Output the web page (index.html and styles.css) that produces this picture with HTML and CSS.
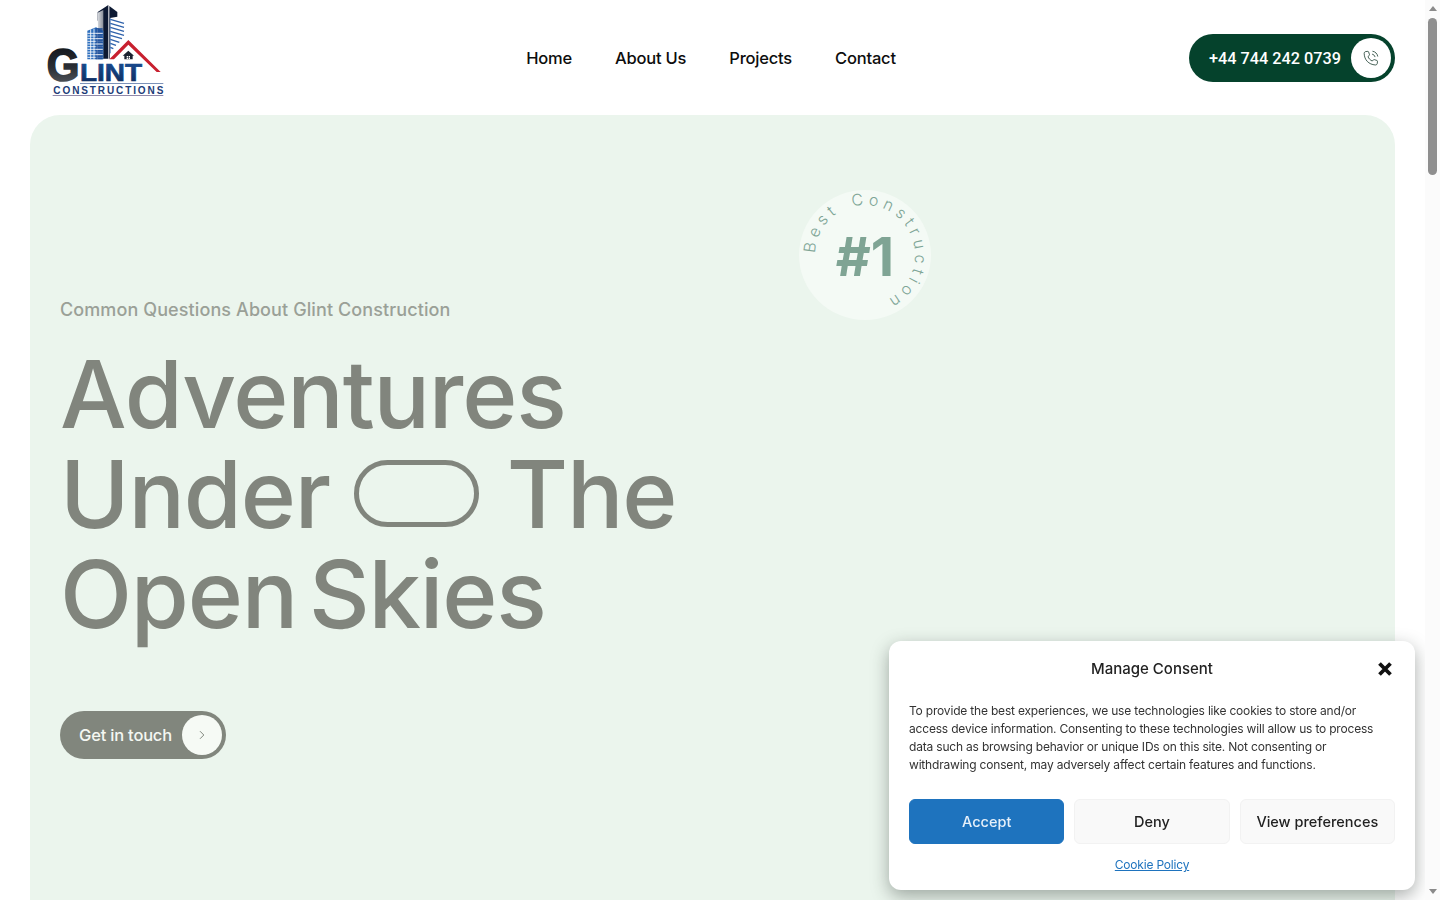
FILE: index.html
```html
<!DOCTYPE html>
<html lang="en">
<head>
<meta charset="utf-8">
<title>Glint Constructions</title>
<link rel="stylesheet" href="styles.css">
</head>
<body>
<div class="page">
  <header class="site-header">
    <a class="logo" href="#" aria-label="Glint Constructions">
      <svg class="logo-svg" viewBox="0 0 450 330" width="150" height="110">
        <defs>
          <linearGradient id="gd" x1="0" y1="0" x2="0" y2="1"><stop offset="0" stop-color="#0c0f14"/><stop offset=".55" stop-color="#2b2f36"/><stop offset="1" stop-color="#62666c"/></linearGradient>
          <linearGradient id="bl" x1="0" y1="0" x2="0" y2="1"><stop offset="0" stop-color="#1a4f96"/><stop offset="1" stop-color="#0d2a5a"/></linearGradient>
          <linearGradient id="tw" x1="0" y1="0" x2="1" y2="0"><stop offset="0" stop-color="#d8dbe0"/><stop offset="1" stop-color="#8b909a"/></linearGradient>
        </defs>
        <path d="M203 36 235 15V176H219V60L203 62Z" fill="#0e1a33"/>
        <path d="M203 38 220 30V176H206Z" fill="url(#tw)"/>
        <path d="M238 18 262 36V50L240 54V176H238Z" fill="#0e1a33"/>
        <path class="wing" d="M241 58 282 70M241 70 282 82M241 82 282 94M241 94 282 106M241 106 276 116M241 118 268 127M241 130 258 136M241 142 250 146"/>
        <path class="wing-side" d="M241 54V160"/>
        <path d="M172 92 198 82 220 92V178H172Z" fill="#2f6fbd"/>
        <path class="grid-line" d="M172 100H218M172 108H218M172 116H218M172 124H218M172 132H218M172 140H218M172 148H218M172 156H218M172 164H218M172 172H218M182 88V178M192 86V178M202 86V178"/>
        <path d="M197 84H218V178H197Z" fill="#1b4a94" opacity=".75"/>
        <path class="grid-line" d="M197 100H218M197 116H218M197 132H218M197 148H218M197 164H218"/>
        <path d="M238 178 295 120 392 216 380 216 295 134 252 178Z" fill="#c8202f"/>
        <path d="M295 152 312 167H308V178H283V167H278Z" fill="#1a2230"/>
        <path d="M290 168H294V172H290ZM296 168H300V172H296ZM290 173H294V177H290ZM296 173H300V177H296Z" fill="#fff"/>
        <text class="logo-g" x="50" y="244" textLength="98" lengthAdjust="spacingAndGlyphs" fill="url(#gd)" stroke="url(#gd)">G</text>
        <text class="logo-lint" x="150" y="243" textLength="186" lengthAdjust="spacingAndGlyphs" fill="url(#bl)" stroke="url(#bl)">LINT</text>
        <rect x="150" y="249" width="250" height="2" fill="#3b5c96"/>
        <text class="logo-sub" x="70" y="282" textLength="330" lengthAdjust="spacing" fill="#1c3c78">CONSTRUCTIONS</text>
        <rect x="68" y="286" width="332" height="2" fill="#5a4f80"/>
      </svg>
    </a>
    <nav class="main-nav">
      <a href="#">Home</a>
      <a href="#">About Us</a>
      <a href="#">Projects</a>
      <a href="#">Contact</a>
    </nav>
    <a class="phone-pill" href="#">
      <span class="phone-num">+44 744 242 0739</span>
      <span class="pill-circle">
        <svg viewBox="0 0 24 24" width="19" height="19" class="phone-icon">
          <path d="M6.200 3.200 8.600 3c.5 0 .9.3 1 .7l1.100 3.400c.1.400 0 .8-.3 1.100L8.800 9.600c.9 2.300 2.900 4.500 5.400 5.600l1.500-1.500c.3-.3.7-.4 1.100-.3l3.300 1.100c.4.100.7.500.7 1l-.2 2.500c-.1 1.300-1.200 2.300-2.500 2.200C9.700 19.500 4.300 13.900 4 5.700 4 4.400 4.900 3.300 6.200 3.200Z"/>
          <path d="M14 6.500c2 .4 3.300 1.700 3.700 3.700M14.500 2.800c3.600.6 6.100 3.100 6.700 6.700"/>
        </svg>
      </span>
    </a>
  </header>

  <main class="hero">
    <div class="hero-copy">
      <p class="eyebrow">Common Questions About Glint Construction</p>
      <h1 class="hero-title">
        <span class="title-line">Adventures</span>
        <span class="title-line">Under <span class="title-pill"></span> The</span>
        <span class="title-line">Open Skies</span>
      </h1>
      <a class="cta" href="#">
        <span class="cta-label">Get in touch</span>
        <span class="cta-circle">
          <svg viewBox="0 0 10 10" width="10" height="10" class="chev"><path d="M3 1.200 6.800 5 3 8.800"/></svg>
        </span>
      </a>
    </div>
    <div class="badge">
      <svg viewBox="0 0 132 130" width="132" height="130" class="badge-ring">
        <defs><path id="ring" d="M16 63.300A50 50 0 1 1 78.900 113.300"/></defs>
        <text class="ring-text"><textPath href="#ring" textLength="209" lengthAdjust="spacing">Best Construction</textPath></text>
      </svg>
      <span class="badge-num">#1</span>
    </div>
  </main>
</div>

<aside class="consent">
  <div class="consent-head">
    <span class="consent-title">Manage Consent</span>
    <button class="consent-close" aria-label="Close">
      <svg viewBox="0 0 16 16" width="16" height="16"><path d="M2.500 2.500 13.500 13.500M13.500 2.500 2.500 13.500"/></svg>
    </button>
  </div>
  <p class="consent-text">To provide the best experiences, we use technologies like cookies to store and/or access device information. Consenting to these technologies will allow us to process data such as browsing behavior or unique IDs on this site. Not consenting or withdrawing consent, may adversely affect certain features and functions.</p>
  <div class="consent-actions">
    <button class="btn btn-accept">Accept</button>
    <button class="btn">Deny</button>
    <button class="btn">View preferences</button>
  </div>
  <a class="consent-link" href="#">Cookie Policy</a>
</aside>

<div class="scrollbar" aria-hidden="true">
  <span class="arrow arrow-up"></span>
  <span class="thumb"></span>
  <span class="arrow arrow-down"></span>
</div>
</body>
</html>
```
FILE: styles.css
```css
* { box-sizing: border-box; }
html, body { margin: 0; height: 100%; overflow: hidden; background: #fff; }
body { font-family: Inter, "Noto Sans", sans-serif; color: #111; }
a { text-decoration: none; color: inherit; }

.page { width: 1425px; height: 900px; overflow: hidden; padding-right: 30px; padding-left: 30px; }

.site-header { height: 115px; display: flex; align-items: flex-start; justify-content: space-between; position: relative; }
.logo { display: block; width: 150px; height: 110px; }
.logo-svg { display: block; }
.wing { stroke: #2f62ab; stroke-width: 4; fill: none; }
.wing-side { stroke: #2f62ab; stroke-width: 2; fill: none; }
.grid-line { stroke: #fff; stroke-width: 2.500; fill: none; }
.logo-g { font: 700 140px "Liberation Sans", sans-serif; stroke-width: 5; }
.logo-lint { font: 700 72px "Liberation Sans", sans-serif; stroke-width: 2; }
.logo-sub { font: 700 30px "Liberation Sans", sans-serif; }

.main-nav { display: flex; gap: 43px; margin-top: 48px; margin-left: 53px; font-size: 16.500px; font-weight: 500; line-height: 20px; color: #0d0d0d; letter-spacing: -.2px; }

.phone-pill { margin-top: 34px; width: 206px; height: 48px; border-radius: 24px; background: #05422c; color: #fff; display: flex; align-items: center; justify-content: space-between; padding: 0 4px 0 20px; }
.phone-num { font-family: Roboto, sans-serif; font-size: 16.250px; font-weight: 500; white-space: nowrap; }
.pill-circle { width: 40px; height: 40px; border-radius: 50%; background: #fff; display: flex; align-items: center; justify-content: center; }
.phone-icon { fill: none; stroke: #16382a; stroke-width: 1; margin-left: -2px; }

.hero { position: relative; height: 785px; background: #ebf5ed; border-radius: 30px 30px 0 0; padding: 183px 30px 0; }
.eyebrow { margin: 0; font-size: 18px; line-height: 24px; font-weight: 500; color: #9aa097; letter-spacing: .1px; }
.hero-title { margin: 22px 0 0; font-size: 94px; line-height: 100px; font-weight: 520; color: #81857d; letter-spacing: -1.200px; word-spacing: -12px; }
.title-line { display: flex; align-items: center; height: 100px; white-space: nowrap; }
.title-pill { display: inline-block; width: 125px; height: 67px; border: 5px solid #81857d; border-radius: 34px; margin: 0 28px 2px 24px; }
.cta { margin-top: 67px; width: 166px; height: 48px; border-radius: 24px; background: #81867d; color: #f4f7f2; display: flex; align-items: center; justify-content: space-between; padding: 0 4px 0 19px; }
.cta-label { font-size: 16.500px; font-weight: 500; letter-spacing: -.2px; white-space: nowrap; }
.cta-circle { width: 40px; height: 40px; border-radius: 50%; background: #f6faf5; display: flex; align-items: center; justify-content: center; }
.chev { fill: none; stroke: #81867d; stroke-width: 1; }

.badge { position: absolute; left: 769px; top: 75px; width: 132px; height: 130px; border-radius: 50%; background: #f4faf5; display: flex; align-items: center; justify-content: center; }
.badge-ring { position: absolute; left: 0; top: 0; overflow: visible; }
.ring-text { font-size: 16px; font-weight: 300; fill: #7ea595; font-family: Inter, sans-serif; word-spacing: 4px; }
.badge-num { font-size: 54px; font-weight: 700; line-height: 1; color: #7fa494; margin-top: 3px; }

.consent { position: fixed; left: 889px; top: 641px; width: 526px; height: 249px; background: #fff; border-radius: 12px; box-shadow: 0 6px 18px rgba(40, 50, 45, .4); padding: 0 20px; display: flex; flex-direction: column; }
.consent-head { height: 55px; display: flex; align-items: center; justify-content: center; position: relative; }
.consent-title { font-size: 15px; font-weight: 500; color: #222; }
.consent-close { position: absolute; right: 2px; top: 20px; padding: 0; width: 16px; height: 16px; border: 0; background: none; }
.consent-close svg { display: block; fill: none; stroke: #111; stroke-width: 3.800; }
.consent-text { margin: 6px 0 0; font-size: 12px; line-height: 18px; letter-spacing: -.19px; color: #333; }
.consent-actions { margin-top: 25px; display: grid; grid-template-columns: repeat(3, 1fr); gap: 10px; }
.btn { height: 45px; border: 1px solid #f2f2f2; border-radius: 6px; background: #f9f9f9; font: 500 14.500px Inter, sans-serif; color: #222; padding: 0; }
.btn-accept { background: #1e73be; border-color: #1e73be; color: #e6f0fa; }
.consent-link { margin-top: 13px; text-align: center; font-size: 12px; line-height: 16px; color: #1e73be; text-decoration: underline; letter-spacing: -.2px; }

.scrollbar { position: fixed; right: 0; top: 0; width: 15px; height: 900px; background: #fbfbfb; display: flex; flex-direction: column; align-items: center; justify-content: space-between; }
.thumb { position: absolute; left: 3px; top: 18px; width: 9px; height: 157px; border-radius: 5px; background: #8f8f8f; }
.arrow { width: 0; height: 0; border-left: 4.500px solid transparent; border-right: 4.500px solid transparent; }
.arrow-up { margin-top: 6px; border-bottom: 5px solid #8a8a8a; }
.arrow-down { margin-bottom: 6px; border-top: 5px solid #8a8a8a; }
```
